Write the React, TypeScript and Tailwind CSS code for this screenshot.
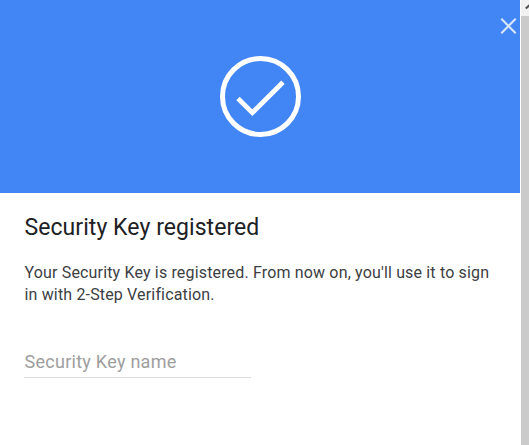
function CloseIcon() {
  return (
    <svg width="17" height="16" viewBox="0 0 17 16" fill="none" stroke="#d9e7fd" strokeWidth="2">
      <path d="M1.3 0.8 15.7 15.2M15.7 0.8 1.3 15.2" />
    </svg>
  );
}

function SuccessIcon() {
  return (
    <svg width="82" height="82" viewBox="0 0 82 82" fill="none" stroke="#fff" strokeWidth="5">
      <circle cx="41.5" cy="40.5" r="38" />
      <path d="M19 42.5 33.3 56.7 64 26.3" strokeWidth="4.8" />
    </svg>
  );
}

function Scrollbar() {
  return (
    <div className="flex w-2 flex-col overflow-hidden bg-[#f1f1f1]">
      <div className="h-4 shrink-0">
        <svg width="8" height="16" viewBox="0 0 8 16" fill="none" stroke="#505050" strokeWidth="2">
          <path d="M4.8 8.5 9 4.7" />
        </svg>
      </div>
      <div className="flex-1 bg-[#cbcbcb]" />
    </div>
  );
}

export default function App() {
  return (
    <div className="flex h-[445px] w-[529px] overflow-hidden bg-white font-['Roboto',sans-serif]">
      <main className="w-[520px]">
        <header className="relative flex h-[193px] justify-center bg-[#4285f4] pt-14">
          <SuccessIcon />
          <button aria-label="Close" className="absolute top-[18px] right-[3px]">
            <CloseIcon />
          </button>
        </header>
        <section className="px-6 pt-[19px]">
          <h1 className="pl-[0.5px] text-[23px] leading-8 tracking-[0.06px] whitespace-nowrap text-[#202124]">
            Security Key registered
          </h1>
          <p className="mt-[18px] pl-[0.5px] text-[16px] leading-[22px] tracking-[0.16px] whitespace-nowrap text-[#3c4043]">
            Your Security Key is registered. From now on, you'll use it to sign
            <br />
            in with 2-Step Verification.
          </p>
          <input
            aria-label="Security Key name"
            placeholder="Security Key name"
            className="mt-10 block h-8 w-[227px] border-b border-[#dcdcdc] pl-[0.5px] text-[18px] tracking-[0.27px] outline-none placeholder:text-[#9e9e9e]"
          />
        </section>
      </main>
      <div className="w-px bg-white" />
      <Scrollbar />
    </div>
  );
}
